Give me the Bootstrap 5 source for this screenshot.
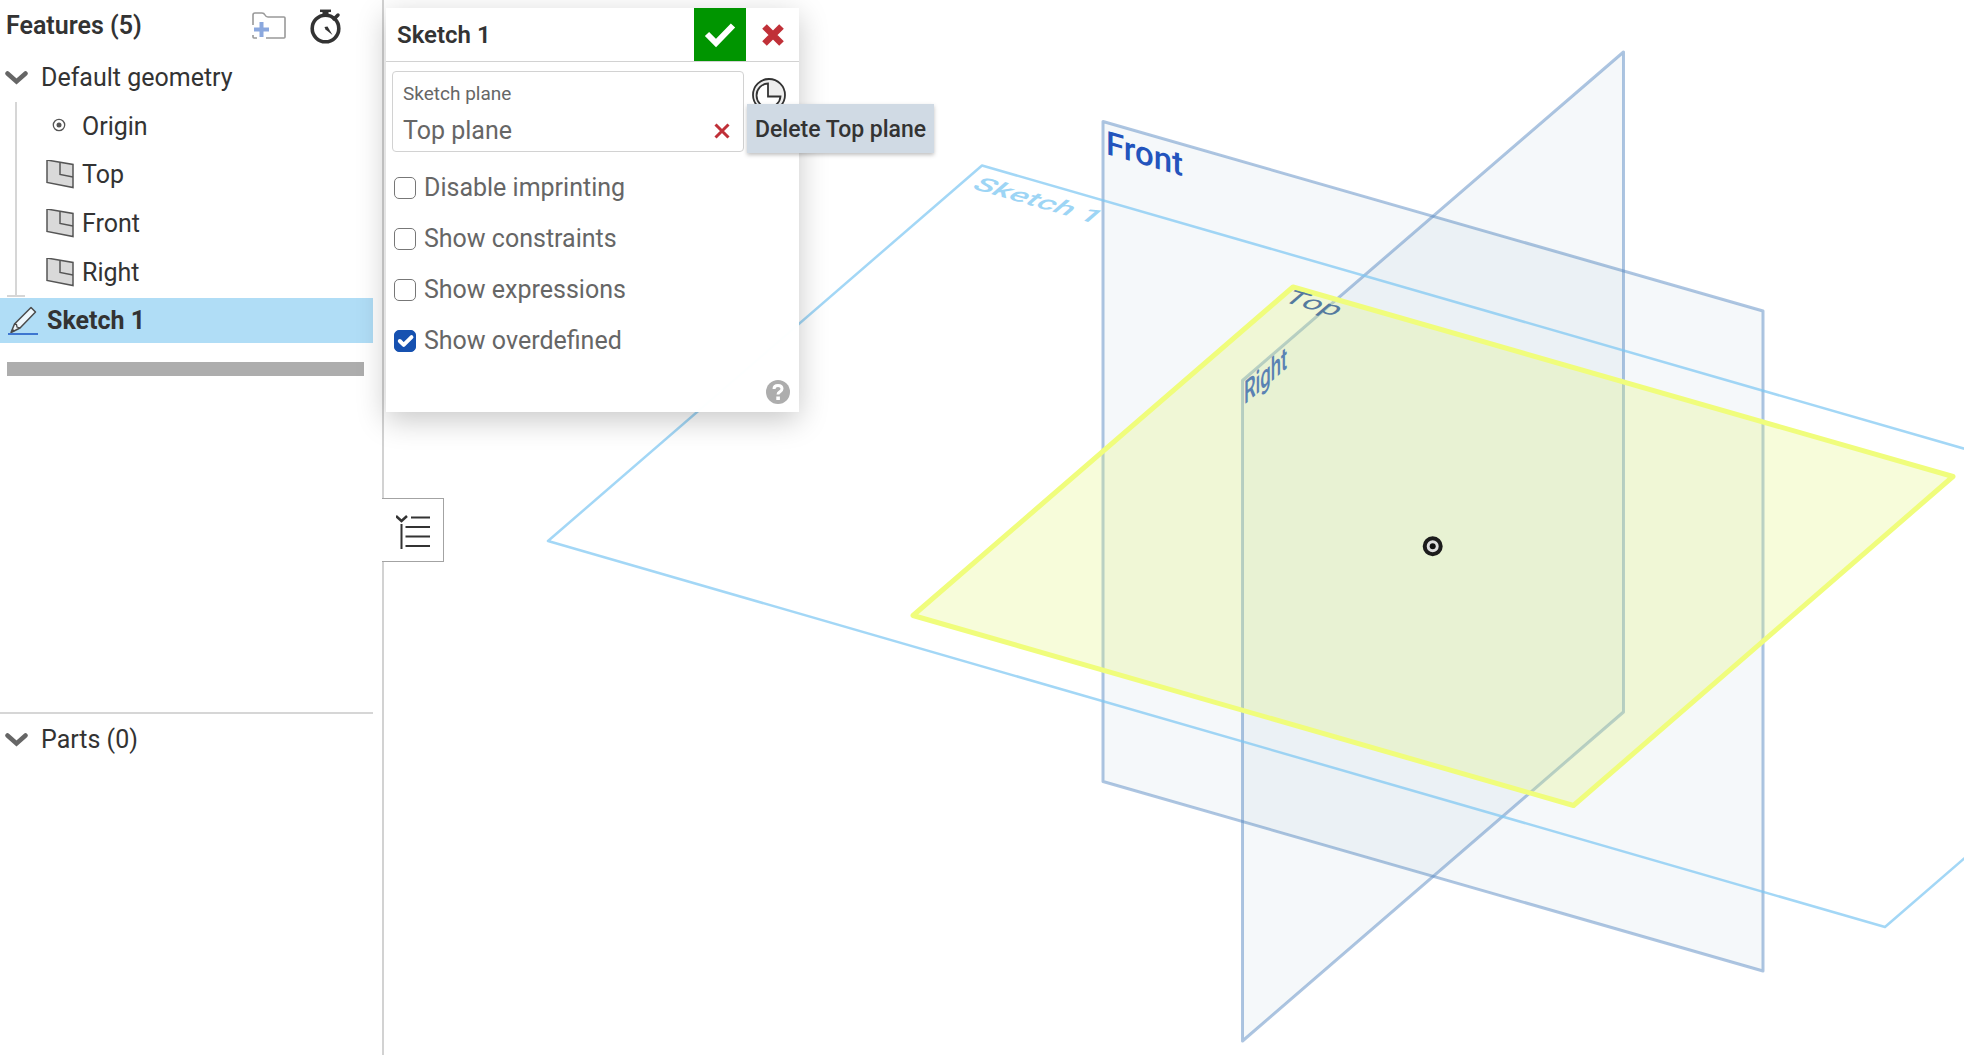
<!DOCTYPE html>
<html lang="en">
<head>
<meta charset="utf-8">
<meta name="viewport" content="width=device-width, initial-scale=1">
<title>Part Studio</title>
<link href="https://cdn.jsdelivr.net/npm/bootstrap@5.3.0/dist/css/bootstrap.min.css" rel="stylesheet">
<style>
  body { font-family: Roboto, "Liberation Sans", sans-serif; font-size: 25px; line-height: 32px; color: #333; background: #fff; }
  button { color: inherit; }
  .plain-btn { background: none; border: 0; padding: 0; display: inline-flex; align-items: center; }
  svg { display: block; flex: none; }

  /* feature list */
  .feature-side { width: 384px; border-right: 2px solid #d2d2d2; }
  .side-inner { width: 373px; }
  .side-head { height: 52px; padding-left: 6px; padding-right: 32px; font-weight: 600; }
  .group-row { height: 50px; padding-left: 5px; padding-top: 2px; gap: 13px; }
  .tree { margin: 0; padding: 0 0 0 46px; list-style: none; }
  .tree::before { content: ""; position: absolute; left: 15px; top: 0; bottom: 2px; width: 2px; background: #d6d6d6; }
  .tree::after { content: ""; position: absolute; left: 7px; bottom: 0; width: 18px; height: 2px; background: #d6d6d6; }
  .tree li { height: 48px; gap: 8px; padding-top: 1px; }
  .tree li + li { height: 49px; }
  .tree svg { width: 28px; height: 30px; }
  .picked { height: 45px; margin-top: 1px; padding-left: 8px; padding-top: 1px; gap: 9px; background: #b0ddf6; font-weight: 700; }
  .rollback { height: 14px; margin: 19px 9px 0 7px; background: #adadad; }
  .feature-block { height: 712px; }
  .part-block { border-top: 2px solid #d6d6d6; }

  /* graphics area */
  .scene { width: 100%; height: 100%; }
  .toggle-tab { position: absolute; left: -2px; top: 498px; width: 62px; height: 64px; background: #fff; border: 1px solid #a3a3a3; border-left: 0; padding: 3px 0 0 14px; }
  .dialog-box { position: absolute; left: 2px; top: 8px; width: 413px; height: 404px; background: rgba(255,255,255,.98); box-shadow: 0 8px 28px rgba(0,0,0,.22); color: #666; }
  .dialog-head { height: 54px; border-bottom: 1px solid #d2d2d2; color: #333; }
  .dialog-title { font-size: 24px; font-weight: 600; padding-left: 11px; padding-top: 1px; margin: 0; line-height: 32px; }
  .ok-btn { width: 52px; height: 53px; background: #009500; border: 0; padding: 0; }
  .cancel-btn { width: 53px; height: 53px; background: none; border: 0; padding: 0; }
  .plane-field { width: 352px; height: 81px; border: 1px solid #d2d2d2; border-radius: 4px; padding: 7px 13px 0 10px; }
  .field-name { font-size: 19px; line-height: 30px; }
  .field-value { line-height: 44px; }
  .dialog-body { padding: 9px 6px 0; }
  .opts { padding: 10px 8px 0; }
  .opt-row { height: 51px; gap: 8px; }
  .opt-row .form-check-input { width: 22px; height: 22px; margin: 0; border: 1px solid #777; border-radius: 5px; }
  .opt-row .form-check-input:checked { background-color: #1651b0; border-color: #1651b0; background-size: 26px; }
  .help-btn { position: absolute; right: 9px; bottom: 8px; }
  .tip { position: absolute; left: 363px; top: 104px; height: 49px; padding: 2px 8px 0; background: #d0dae4; box-shadow: 0 2px 4px rgba(0,0,0,.25); font-size: 23px; font-weight: 500; line-height: 48px; color: #333; white-space: nowrap; }
</style>
</head>
<body>
<div class="d-flex vh-100 overflow-hidden">
  <aside class="feature-side flex-shrink-0">
    <div class="side-inner feature-block">
      <div class="side-head d-flex align-items-center justify-content-between">
        <span>Features (5)</span>
        <span class="d-flex align-items-center gap-4">
          <button class="plain-btn" aria-label="Add folder">
            <svg width="34" height="28" viewBox="0 0 34 28" fill="none"><path d="M1 13V3q0-2 2-2h7q2 0 3 2t3 2h16q1 0 1 1v19q0 1-1 1H14M1 23v2q0 1 1 1h3" stroke="#999" stroke-width="1.6"/><path d="M9.500 10v15M2 17.500h15" stroke="#8ba8de" stroke-width="4"/></svg>
          </button>
          <button class="plain-btn" aria-label="Regeneration times">
            <svg width="31" height="35" viewBox="0 0 31 35" fill="none" stroke="#333"><circle cx="15.500" cy="19.500" r="13.300" stroke-width="3.600"/><path d="M10 1.800h11" stroke-width="2.500"/><path d="M15.500 1v6" stroke-width="6"/><path d="M24 10l4-4" stroke-width="3.500" stroke-linecap="round"/><path d="M14.500 18l3-.5 5 8.500-7-5.500z" fill="#333" stroke="none"/></svg>
          </button>
        </span>
      </div>
      <button class="plain-btn group-row w-100">
        <svg width="23" height="14" viewBox="0 0 23 14"><path d="M2.500 2.500l9 8 9-8" fill="none" stroke="#666" stroke-width="4.500" stroke-linecap="round"/></svg>
        <span>Default geometry</span>
      </button>
      <ul class="tree position-relative">
        <li class="d-flex align-items-center">
          <svg viewBox="0 0 28 30" fill="none"><circle cx="13" cy="13" r="5.700" stroke="#555" stroke-width="1.300"/><circle cx="13" cy="13" r="2.500" fill="#555"/></svg><span>Origin</span>
        </li>
        <li class="d-flex align-items-center">
          <svg viewBox="0 0 28 30"><path d="M1 0l26 4.500v23L1 22.500z" fill="#d9d9d9" stroke="#555" stroke-width="1.500"/><path d="M14 2.500v12l13 2.500" fill="none" stroke="#555" stroke-width="1.500"/></svg><span>Top</span>
        </li>
        <li class="d-flex align-items-center">
          <svg viewBox="0 0 28 30"><path d="M1 0l26 4.500v23L1 22.500z" fill="#d9d9d9" stroke="#555" stroke-width="1.500"/><path d="M14 2.500v12l13 2.500" fill="none" stroke="#555" stroke-width="1.500"/></svg><span>Front</span>
        </li>
        <li class="d-flex align-items-center">
          <svg viewBox="0 0 28 30"><path d="M1 0l26 4.500v23L1 22.500z" fill="#d9d9d9" stroke="#555" stroke-width="1.500"/><path d="M14 2.500v12l13 2.500" fill="none" stroke="#555" stroke-width="1.500"/></svg><span>Right</span>
        </li>
      </ul>
      <div class="picked d-flex align-items-center">
        <svg width="30" height="30" viewBox="0 0 30 30"><path d="M3 26.500l3.500-8.500L23 1.500l4.500 4.500L12 22z" fill="#eef7fc" stroke="#4a4a4a" stroke-width="1.500" stroke-linejoin="round"/><path d="M6.500 18l2 .5.500 2.500 3 1" fill="none" stroke="#4a4a4a" stroke-width="1.300"/><path d="M3 26.500l1.500-4 2.500 2.500z" fill="#4a4a4a"/><path d="M0 28h30" stroke="#3d76d0" stroke-width="2"/></svg>
        <span>Sketch 1</span>
      </div>
      <div class="rollback"></div>
    </div>
    <div class="side-inner part-block">
      <button class="plain-btn group-row w-100">
        <svg width="23" height="14" viewBox="0 0 23 14"><path d="M2.500 2.500l9 8 9-8" fill="none" stroke="#666" stroke-width="4.500" stroke-linecap="round"/></svg>
        <span>Parts (0)</span>
      </button>
    </div>
  </aside>

  <main class="flex-grow-1 position-relative">
    <svg class="scene" viewBox="384 0 1580 1055" preserveAspectRatio="xMinYMin slice" stroke-linejoin="round">
      <!-- front and right planes -->
      <g fill="#4678a5" fill-opacity=".055" stroke="#5b8bc4" stroke-opacity=".5" stroke-width="3">
        <path d="M1103 121.500L1763 311v660L1103 781.500z"/>
        <path d="M1242.500 380.500L1623.500 52v660L1242.500 1041z"/>
      </g>
      <!-- sketch outline -->
      <path d="M982 165.500L548 541l1337 386 434-376z" fill="none" stroke="#7cc6f2" stroke-opacity=".7" stroke-width="2.500"/>
      <!-- highlighted top plane -->
      <path d="M1293 287L1953 476.500 1573.500 805.500 913 615.500z" fill="#e2f67a" fill-opacity=".28" stroke="#f0fd7c" stroke-width="5"/>
      <!-- plane names lie in the projection of their own plane -->
      <g font-family="Roboto, sans-serif" font-size="32" font-weight="500">
        <text transform="matrix(1 .287 0 1 1106 154)" font-size="33" fill="#2354bd">Front</text>
        <text transform="matrix(.577 -.498 0 1 1244 405)" fill="#5a82b3">Right</text>
        <text transform="matrix(1 .287 -.577 .498 1281 301)" font-weight="400" fill="#557a9e">Top</text>
        <text transform="matrix(1 .287 -.577 .498 970 188)" fill="#9dd5f5">Sketch 1</text>
      </g>
      <circle cx="1432.700" cy="546.300" r="8" fill="#ddd" stroke="#1c1c1c" stroke-width="4"/>
      <circle cx="1432.700" cy="546.300" r="3" fill="#111"/>
    </svg>

    <button class="toggle-tab d-flex align-items-center" aria-label="Toggle feature list">
      <svg width="34" height="36" viewBox="0 0 34 36" fill="none" stroke="#333" stroke-width="2"><path d="M0 2l5.500 5 5.500-5" stroke-width="2.500"/><path d="M5.500 10v25M15 3.500h19M9.500 13H34M9.500 22.500H34M9.500 32H34"/></svg>
    </button>

    <section class="dialog-box">
      <div class="dialog-head d-flex">
        <h2 class="dialog-title flex-grow-1 align-self-center">Sketch 1</h2>
        <button class="ok-btn d-flex align-items-center justify-content-center" aria-label="Accept">
          <svg width="32" height="26" viewBox="0 0 32 26"><path d="M3 12l9 9L29 3.500" fill="none" stroke="#fff" stroke-width="6"/></svg>
        </button>
        <button class="cancel-btn d-flex align-items-center justify-content-center" aria-label="Cancel">
          <svg width="24" height="24" viewBox="0 0 24 24"><path d="M3.500 3.500l17 17M20.500 3.500l-17 17" stroke="#c03038" stroke-width="6.500"/></svg>
        </button>
      </div>
      <div class="dialog-body d-flex align-items-start">
        <div class="plane-field">
          <div class="field-name">Sketch plane</div>
          <div class="field-value d-flex align-items-center justify-content-between">
            <span>Top plane</span>
            <button class="plain-btn" aria-label="Delete Top plane">
              <svg width="16" height="16" viewBox="0 0 16 16"><path d="M1.500 1.500l13 13M14.500 1.500l-13 13" stroke="#c03038" stroke-width="3"/></svg>
            </button>
          </div>
        </div>
        <button class="plain-btn ms-2" aria-label="Final">
          <svg width="34" height="48" viewBox="0 0 34 48" fill="none" stroke="#333" stroke-width="1.800"><circle cx="17" cy="24" r="16" fill="#eee"/><path d="M16 12.500a12 12 0 1 0 12.500 13H16z" fill="#fff"/></svg>
        </button>
      </div>
      <div class="opts">
        <div class="opt-row d-flex align-items-center"><input class="form-check-input" type="checkbox" id="imprint"><label for="imprint">Disable imprinting</label></div>
        <div class="opt-row d-flex align-items-center"><input class="form-check-input" type="checkbox" id="constr"><label for="constr">Show constraints</label></div>
        <div class="opt-row d-flex align-items-center"><input class="form-check-input" type="checkbox" id="expr"><label for="expr">Show expressions</label></div>
        <div class="opt-row d-flex align-items-center"><input class="form-check-input" type="checkbox" id="over" checked><label for="over">Show overdefined</label></div>
      </div>
      <button class="plain-btn help-btn" aria-label="Help">
        <svg width="24" height="24" viewBox="0 0 24 24"><circle cx="12" cy="12" r="12" fill="#adadad"/><path d="M8 9q0-3.500 4-3.500t4 3.200q0 2-2.200 3.200-1.800 1-1.800 2.600" fill="none" stroke="#fff" stroke-width="3"/><path d="M10.300 16.500h3.600V20h-3.600z" fill="#fff"/></svg>
      </button>
    </section>
    <div class="tip" role="tooltip">Delete Top plane</div>
  </main>
</div>
<script src="https://cdn.jsdelivr.net/npm/bootstrap@5.3.0/dist/js/bootstrap.bundle.min.js"></script>
</body>
</html>
